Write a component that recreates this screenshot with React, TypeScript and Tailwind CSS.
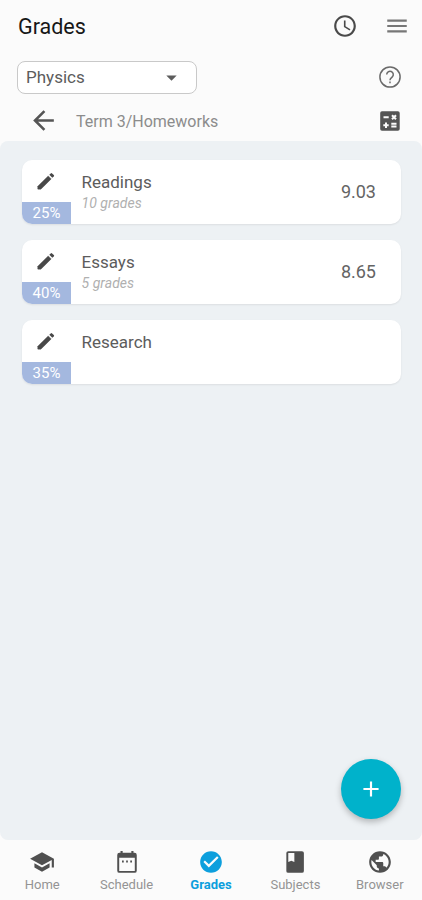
import {
  MdAccessTime,
  MdAdd,
  MdArrowBack,
  MdArrowDropDown,
  MdCheckCircle,
  MdMenu,
  MdPublic,
  MdSchool,
} from "react-icons/md";

type IconProps = { size?: number; className?: string };

function PencilIcon({ size = 18, className }: IconProps) {
  return (
    <svg width={size} height={size} viewBox="0 0 18 18" className={className}>
      <path
        d="M.8 14.2 11.2 3.9l3 3L3.9 17.2H1.2a.5.5 0 0 1-.5-.5z"
        fill="currentColor"
        stroke="currentColor"
        strokeWidth="0.4"
      />
      <path
        d="m12.3 2.8 1.4-1.4a1 1 0 0 1 1.4 0L16.8 3a1 1 0 0 1 0 1.4l-1.5 1.4z"
        fill="currentColor"
      />
    </svg>
  );
}

function HelpIcon({ size = 22, className }: IconProps) {
  return (
    <svg
      width={size}
      height={size}
      viewBox="0 0 22 22"
      fill="none"
      stroke="currentColor"
      strokeWidth="1.5"
      className={className}
    >
      <circle cx="11" cy="11" r="10.1" />
      <path d="M7.7 8.6a3.3 3.3 0 1 1 5.6 2.3C12 12.1 11 12.5 11 14.2" />
      <path d="M11 15.5v1.7" />
    </svg>
  );
}

function CalculatorIcon({ size = 20, className }: IconProps) {
  return (
    <svg width={size} height={size} viewBox="0 0 20 20" className={className}>
      <rect width="19.5" height="19.5" x=".2" y=".2" rx="1.8" fill="currentColor" />
      <g stroke="#fbfbfb" strokeWidth="2">
        <path d="M3.5 6.2h5.2M11.3 12.8h5.2M11.3 15.6h5.2M3.3 14.2h5.4M6 11.5v5.4" />
        <path d="m12 4.2 4 4m0-4-4 4" />
      </g>
    </svg>
  );
}

function CalendarIcon({ size = 26 }: IconProps) {
  return (
    <svg width={size} height={size} viewBox="0 0 24 24">
      <path
        d="M5 3.5h1V1.8h2v1.7h8V1.8h2v1.7h1a2 2 0 0 1 2 2V20a2 2 0 0 1-2 2H5a2 2 0 0 1-2-2V5.5a2 2 0 0 1 2-2zM4.8 8v12.2h14.4V8z"
        fill="currentColor"
        fillRule="evenodd"
      />
      <path
        d="M7.4 10.5H9v2H7.4zM11.2 10.5h1.600v2h-1.600zM15 10.5h1.600v2H15z"
        fill="currentColor"
      />
    </svg>
  );
}

function BookIcon({ size = 26 }: IconProps) {
  return (
    <svg width={size} height={size} viewBox="0 0 24 24">
      <rect x="4" y="2" width="16.2" height="20" rx="1.8" fill="currentColor" />
      <path d="M5.8 3.7h5.6V12l-2.8-1.2L5.8 12z" fill="#fbfbfb" />
    </svg>
  );
}

const categories = [
  { name: "Readings", weight: "25%", count: "10 grades", average: "9.03" },
  { name: "Essays", weight: "40%", count: "5 grades", average: "8.65" },
  { name: "Research", weight: "35%" },
];

const tabs = [
  { label: "Home", icon: MdSchool },
  { label: "Schedule", icon: CalendarIcon },
  { label: "Grades", icon: MdCheckCircle, active: true },
  { label: "Subjects", icon: BookIcon },
  { label: "Browser", icon: MdPublic },
];

type CategoryProps = {
  name: string;
  weight: string;
  count?: string;
  average?: string;
};

function CategoryCard({ name, weight, count, average }: CategoryProps) {
  return (
    <div className="flex h-16 overflow-hidden rounded-[10px] bg-white shadow-[0_1px_2px_rgba(0,0,0,0.08)]">
      <div className="flex w-[49px] flex-col">
        <button
          className="flex h-[42px] items-center justify-center text-[#484848]"
          aria-label="Edit"
        >
          <PencilIcon className="mr-px" />
        </button>
        <div className="h-[22px] bg-[#a4b8df] text-center text-[15px] leading-[22px] text-white">
          {weight}
        </div>
      </div>
      <div className="ml-[10.5px] flex-1 pt-3">
        <div className="text-[17px] leading-5 text-[#5c5c5c]">{name}</div>
        {count && (
          <div className="mt-px text-sm leading-5 tracking-[0.05px] text-[#b0b0b0] italic">
            {count}
          </div>
        )}
      </div>
      <div className="mr-[25px] self-center pb-0.5 text-[18px] text-[#646464]">
        {average}
      </div>
    </div>
  );
}

export default function App() {
  return (
    <div className="flex h-[900px] w-[422px] flex-col bg-[#fbfbfb] font-[Roboto,sans-serif]">
      <header className="h-[141px]">
        <div className="flex h-[52px] items-center pr-3 pl-[18px]">
          <h1 className="flex-1 pt-0.5 text-[21.5px] text-[#171717]">Grades</h1>
          <MdAccessTime size={26} className="mr-[26px] text-[#4a4a4a]" />
          <MdMenu size={26} className="text-[#777]" />
        </div>
        <div className="flex h-[50px] items-center justify-between pr-[21px] pl-[17px]">
          <div className="flex h-[33px] w-[180px] items-center justify-between rounded-lg border border-[#c9c9c9] bg-white pr-3 pl-2 text-[17px] text-[#5c5c5c]">
            <span className="pt-0.5">Physics</span>
            <MdArrowDropDown size={25} />
          </div>
          <HelpIcon className="text-[#6a6a6a]" />
        </div>
        <div className="flex h-[38px] items-center pr-[22px] pl-7">
          <MdArrowBack size={31} className="mb-0.5 text-[#555]" />
          <span className="ml-[17px] flex-1 pt-0.5 text-[16px] text-[#8c8c8c]">
            Term 3/Homeworks
          </span>
          <CalculatorIcon className="mb-px text-[#555]" />
        </div>
      </header>

      <main className="relative flex flex-1 flex-col gap-4 rounded-lg bg-[#edf1f4] pt-[19px] pr-[21px] pl-[22px]">
        {categories.map((category) => (
          <CategoryCard key={category.name} {...category} />
        ))}
        <button
          className="absolute right-[21px] bottom-[21px] flex size-[60px] items-center justify-center rounded-full bg-[#00b2cb] text-white shadow-[0_3px_6px_rgba(0,0,0,0.25)]"
          aria-label="Add"
        >
          <MdAdd size={26} />
        </button>
      </main>

      <nav className="grid h-[60px] grid-cols-5">
        {tabs.map(({ label, icon: Icon, active }) => (
          <div
            key={label}
            className={`flex flex-col items-center pt-[9px] ${active ? "font-bold text-[#0d9fdd]" : "text-[#505050]"}`}
          >
            <Icon size={26} />
            <span
              className={`mt-[2px] text-[13px] leading-4 ${active ? "" : "text-[#949494]"}`}
            >
              {label}
            </span>
          </div>
        ))}
      </nav>
    </div>
  );
}
